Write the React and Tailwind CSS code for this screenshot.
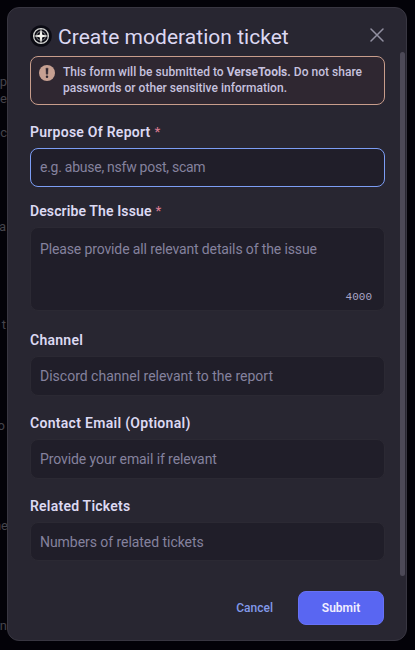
import React from 'react';

function Logo() {
  return (
    <svg viewBox="0 0 22 22" className="mt-[17px] h-[22px] w-[22px] shrink-0" fill="none">
      <circle cx="11" cy="11" r="10.8" fill="#0b0b13" />
      <circle cx="11" cy="11" r="7.4" stroke="#cfd0ce" strokeWidth="1.3" />
      <circle cx="11" cy="11" r="4.4" stroke="#77787c" strokeWidth="1.1" />
      <path d="M11 2.8l1.3 6.9 6.9 1.3-6.9 1.3-1.3 6.9-1.3-6.900-6.900-1.300 6.900-1.300z" fill="#f4f4ee" />
    </svg>
  );
}

function Label({ children, required, className }) {
  return (
    <div className={`flex h-5 items-center text-[14px] font-semibold leading-5 text-[#dcd9f2] ${className}`}>
      <span className="whitespace-nowrap">{children}</span>
      {required && <span className="ml-1 text-[13px] font-medium tracking-normal text-[#d5788d]">*</span>}
    </div>
  );
}

function Input({ text, focused, className, textClass = '' }) {
  return (
    <div
      className={`flex items-center rounded-lg border bg-[#201e29] px-[9px] text-[14px] text-[#85829e] ${
        focused ? 'border-[#7c9df4]' : 'border-[#2b2933]'
      } ${className}`}
    >
      <span className={`whitespace-nowrap ${textClass}`}>{text}</span>
    </div>
  );
}

const behind = [
  { text: 'op', place: 'right-0 top-[74px]' },
  { text: 'le', place: 'right-0 top-[91px]' },
  { text: 'ec', place: 'right-0 top-[125px]' },
  { text: 'a', place: 'right-px top-[219px]' },
  { text: 't', place: 'right-px top-[317px]' },
  { text: 'o', place: 'right-[2px] top-[418px]' },
  { text: 'ne', place: '-right-px top-[518px]' },
  { text: 'n', place: 'right-0 top-[618px]' },
];

export default function App() {
  return (
    <div className='relative h-[650px] w-[415px] overflow-hidden bg-[#030208] font-["Roboto",sans-serif]'>
      <div className="absolute inset-y-0 left-0 w-[7px] text-[13px] leading-4 text-[#45444c]">
        {behind.map((b) => (
          <span key={b.place} className={`absolute ${b.place}`}>{b.text}</span>
        ))}
      </div>
      <div className="relative ml-[7px] pt-[7px]">
        <div className="relative flex h-[634px] w-[400px] flex-col rounded-xl border border-[#383641] bg-[#282631] pl-[22px] pr-[21px]">
          <div className="flex h-12 items-start">
            <Logo />
            <h1 className="ml-[6px] mt-[15px] whitespace-nowrap text-[21px] leading-7 tracking-[0.03px] text-[#dcd8f2]">Create moderation ticket</h1>
            <svg viewBox="0 0 14 14" className="ml-auto mr-[1px] mt-5 h-[14px] w-[14px]" fill="none" stroke="#9290a1" strokeWidth="1.5" strokeLinecap="round">
              <path d="M1 1l12 12M13 1L1 13" />
            </svg>
          </div>
          <div className="flex h-[49px] rounded-lg border border-[#c89d8b] bg-[#2f2731] pl-2">
            <svg viewBox="0 0 16 16" className="mt-2 h-4 w-4 shrink-0">
              <circle cx="8" cy="8" r="8" fill="#c7a092" />
              <path d="M6.9 3.2h2.2l-.3 6H7.2z" fill="#302731" stroke="#302731" strokeWidth=".4" />
              <circle cx="8" cy="11.8" r="1.25" fill="#302731" />
            </svg>
            <p className="ml-2 mt-[7px] whitespace-nowrap text-[12px] font-medium leading-4 tracking-[0.02px] text-[#c6c1df]">
              <span className="block">This form will be submitted to <b className="font-bold">VerseTools.</b> Do not share</span>
              <span className="block">passwords or other sensitive information.</span>
            </p>
          </div>
          <Label required className="mt-[17px] tracking-[0.25px]">Purpose Of Report</Label>
          <Input focused className="mt-[6px] h-[39px]" textClass="tracking-[-0.26px]" text="e.g. abuse, nsfw post, scam" />
          <Label required className="mt-[14px] tracking-[0.11px]">Describe The Issue</Label>
          <div className="mt-[6px] flex h-[84px] flex-col justify-between rounded-lg border border-[#2b2933] bg-[#201e29] pb-[5px] pl-[9px] pr-3 pt-[11px] text-[14px] text-[#85829e]">
            <span className="whitespace-nowrap leading-5 tracking-[-0.13px]">Please provide all relevant details of the issue</span>
            <span className='self-end font-["Liberation_Mono",monospace] text-[11px] leading-4 text-[#aaa6c8]'>4000</span>
          </div>
          <Label className="mt-[19px] tracking-[0.25px]">Channel</Label>
          <Input className="mt-[6px] h-10" text="Discord channel relevant to the report" />
          <Label className="mt-[17px] tracking-[0.3px]">Contact Email (Optional)</Label>
          <Input className="mt-[6px] h-10" textClass="tracking-[-0.09px]" text="Provide your email if relevant" />
          <Label className="mt-[17px] tracking-[0.22px]">Related Tickets</Label>
          <Input className="mt-[6px] h-[39px] pt-px" textClass="tracking-[-0.05px]" text="Numbers of related tickets" />
          <div className="mt-[30px] flex h-[34px] justify-end text-xs">
            <button className="mr-[25px] font-medium text-[#8299ea]">Cancel</button>
            <button className="mr-px h-[34px] w-[86px] rounded-lg border border-[#6771f5] bg-[#5966f2] font-semibold text-[#f1efff]">Submit</button>
          </div>
          <div className="absolute right-[1px] top-[44px] h-[524px] w-[5px] rounded-full bg-[#4c4957]" />
        </div>
      </div>
    </div>
  );
}
